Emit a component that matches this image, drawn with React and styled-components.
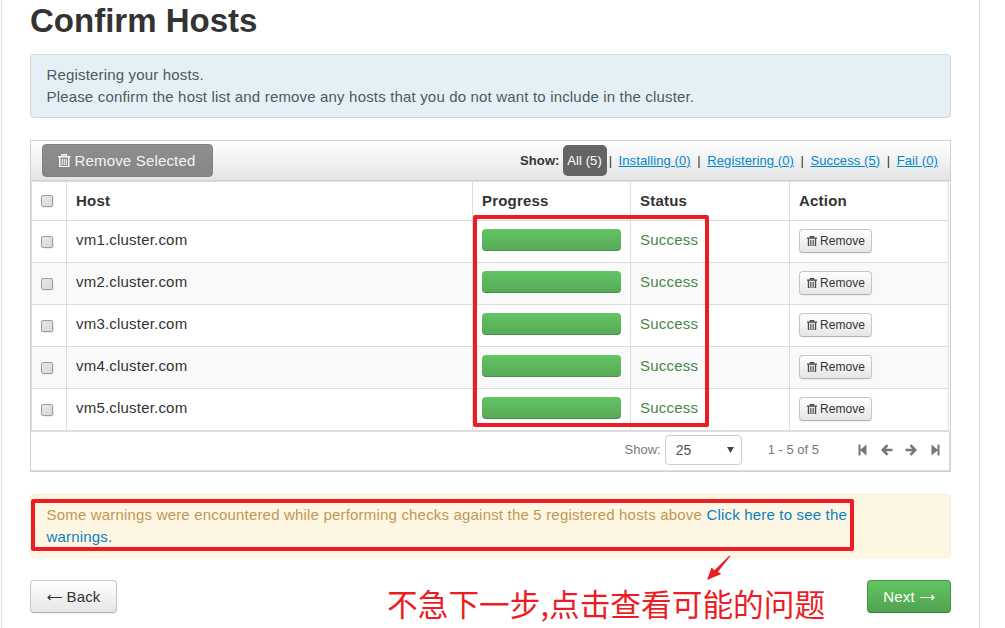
import React from 'react';
import styled, { createGlobalStyle, css } from 'styled-components';

const Global = createGlobalStyle`
  * { box-sizing: border-box; }
  html, body { margin: 0; background: #fff; overflow: hidden; }
  body {
    font: 15px/22px "Liberation Sans", Arial, sans-serif;
    color: #333;
  }
`;

const Page = styled.main`
  position: relative;
  width: 979px;
  height: 628px;
  margin-left: 1px;
  padding: 0 28px;
  border: solid #ddd;
  border-width: 0 1px;
  overflow: hidden;
`;

const Title = styled.h1`
  margin: 0;
  height: 54px;
  font-size: 33px;
  line-height: 41px;
  font-weight: bold;
`;

const Alert = styled.div`
  width: 921px;
  height: 64px;
  padding: 9px 15px 0 15.5px;
  border: 1px solid ${p => (p.$warning ? '#fbeed5' : '#cbd8dd')};
  border-radius: 4px;
  background: ${p => (p.$warning ? '#fdf6e3' : '#e4f0f6')};
  color: ${p => (p.$warning ? '#c09853' : '#4d5a60')};
  letter-spacing: ${p => (p.$warning ? 0.185 : 0.17)}px;
  margin-bottom: 22px;
  white-space: nowrap;
`;

const Link = styled.a`
  color: #0a80c4;
`;

const Panel = styled.section`
  width: 921px;
  height: 332px;
  border: 1px solid #d0d0d0;
  margin-bottom: 22px;
`;

const Toolbar = styled.div`
  display: flex;
  align-items: center;
  height: 40px;
  padding: 0 12px 0 11px;
  border-bottom: 1px solid #d0d0d0;
  background: linear-gradient(#fff, #e4e4e4);
`;

const RemoveSelected = styled.button`
  display: flex;
  align-items: center;
  width: 171px;
  height: 33px;
  padding: 0 0 0 15px;
  gap: 4px;
  border: 1px solid #7f7f7f;
  border-radius: 4px;
  background: linear-gradient(#8e8e8e, #868686);
  color: #f4f4f4;
  font: 15px "Liberation Sans", Arial, sans-serif;
  letter-spacing: 0.17px;
  white-space: nowrap;
`;

const Filters = styled.div`
  display: flex;
  align-items: center;
  margin-left: auto;
  font-size: 13px;
  white-space: nowrap;
  letter-spacing: 0.1px;
`;

const FilterLabel = styled.b`
  margin-right: 3px;
`;

const ActiveFilter = styled.span`
  width: 44px;
  height: 31px;
  border-radius: 5px;
  background: #646464;
  color: #fff;
  line-height: 31px;
  text-align: center;
`;

const FilterLink = styled.a`
  color: #0088cc;
  text-decoration: underline;
`;

const Separator = styled.span`
  width: ${p => p.$w}px;
  text-align: center;
`;

const Table = styled.div`
  width: 918px;
  border-right: 1px solid #ddd;
  border-bottom: 1px solid #ddd;
`;

const Row = styled.div`
  display: grid;
  grid-template-columns: 35px 406px 158px 159px 159px;
  height: ${p => (p.$head ? 39 : 42)}px;
  background: ${p => (p.$striped ? '#f9f9f9' : '#fff')};
  font-weight: ${p => (p.$head ? 'bold' : 'normal')};
`;

const Cell = styled.div`
  display: flex;
  align-items: flex-start;
  padding: 8px 0 0 9px;
  border-left: 1px solid #ddd;
  border-top: 1px solid #ddd;
  color: ${p => (p.$success ? '#468847' : '#333')};
  white-space: nowrap;
  letter-spacing: 0.2px;
`;

const Checkbox = styled.span`
  width: 12px;
  height: 12px;
  margin-top: ${p => (p.$head ? 5 : 7)}px;
  border: 1px solid #9d9d9d;
  border-radius: 2px;
  background: linear-gradient(135deg, #e6e6e6, #dadada);
  box-shadow: 1px 1px 0 #ececec;
`;

const Bar = styled.div`
  width: 139px;
  height: 22px;
  border-radius: 4px;
  background: linear-gradient(#62c462, #57a957);
  box-shadow: inset 0 -1px 0 rgba(0, 0, 0, 0.15);
`;

const buttonBase = css`
  display: flex;
  align-items: center;
  border: 1px solid #c6c6c6;
  border-bottom-color: #b3b3b3;
  border-radius: 4px;
  background: linear-gradient(#fff, #e6e6e6);
  color: #333;
  white-space: nowrap;
  box-shadow: 0 1px 2px rgba(0, 0, 0, 0.06);
`;

const RemoveButton = styled.button`
  ${buttonBase}
  width: 73px;
  height: 24px;
  padding: 0 0 0 7px;
  gap: 3px;
  font: 12px "Liberation Sans", Arial, sans-serif;
  letter-spacing: 0.05px;
`;

const Footer = styled.div`
  display: flex;
  align-items: center;
  height: 40px;
  padding: 0 0 2px 593.5px;
  border: 1px solid #ddd;
  border-left: 0;
  color: #777;
  font-size: 13px;
  white-space: nowrap;
`;

const Select = styled.div`
  display: flex;
  align-items: center;
  justify-content: space-between;
  width: 77px;
  height: 30px;
  margin: 0 26px 0 4px;
  padding: 0 7px 0 10px;
  border: 1px solid #ccc;
  border-radius: 4px;
  color: #555;
  font-size: 14px;
`;

const Pager = styled.div`
  display: flex;
  margin-left: 37px;
  gap: 10px;
`;

const Actions = styled.footer`
  display: flex;
  width: 921px;
  justify-content: space-between;
`;

const NavButton = styled.button`
  ${buttonBase}
  justify-content: center;
  gap: 5px;
  width: ${p => (p.$primary ? 84 : 87)}px;
  height: 33px;
  padding: 0;
  font: 15px "Liberation Sans", Arial, sans-serif;
  letter-spacing: 0.15px;
  ${p =>
    p.$primary &&
    css`
      color: #fff;
      border-color: #4b934b #4b934b #3d7f3d;
      background: linear-gradient(#62c462, #51a351);
    `}
`;

const Highlight = styled.div`
  position: absolute;
  left: ${p => p.$x}px;
  top: ${p => p.$y}px;
  width: ${p => p.$w}px;
  height: ${p => p.$h}px;
  border: 4px solid #ed1c24;
  border-radius: 2px;
`;

const Note = styled.div`
  position: absolute;
  left: 385px;
  top: 582px;
  color: #ed1c24;
  font: 400 30.7px/42px "Noto Sans CJK SC", sans-serif;
  white-space: nowrap;
`;

const Pointer = styled.svg`
  position: absolute;
  left: 703px;
  top: 552px;
`;

const Trash = ({ size = 13, color = '#4a4a4a' }) => (
  <svg width={size} height={size * 13 / 12} viewBox="0 0 12 13" fill="none" stroke={color}>
    <path d="M0 2.6h12M4 2.4V.8h4v1.6M1.7 3v9.2h8.6V3" strokeWidth="1.5" />
    <path d="M4.1 4.6v6.2M6 4.6v6.2M7.9 4.6v6.2" strokeWidth="1" />
  </svg>
);

const PagerIcon = ({ kind, flip }) => (
  <svg width="14" height="14" viewBox="0 0 14 14" fill="#777" transform={flip ? 'scale(-1,1)' : undefined}>
    {kind === 'end' ? (
      <path d="M2.5 1.5h2v5L10.5 1.5v11L4.5 7.5v5h-2z" />
    ) : (
      <path d="M1 7 6.6 1.2l1.8 1.8L5.9 5.7h6.6v2.6H5.9L8.4 11l-1.8 1.8z" />
    )}
  </svg>
);

const LongArrow = ({ color, flip }) => (
  <svg width="15" height="9" viewBox="0 0 15 9" fill="none" stroke={color} transform={flip ? 'scale(-1,1)' : undefined}>
    <path d="M1 5.5h14M3.5 3 1 5.5 3.5 8" strokeWidth="1.1" />
  </svg>
);

const hosts = ['vm1', 'vm2', 'vm3', 'vm4', 'vm5'];

export default function App() {
  return (
    <>
      <Global />
      <Page>
        <Title>Confirm Hosts</Title>
        <Alert>
          Registering your hosts.
          <br />
          Please confirm the host list and remove any hosts that you do not want to include in the cluster.
        </Alert>
        <Panel>
          <Toolbar>
            <RemoveSelected>
              <Trash size={12.5} color="#f4f4f4" />
              Remove Selected
            </RemoveSelected>
            <Filters>
              <FilterLabel>Show:</FilterLabel>
              <ActiveFilter>All (5)</ActiveFilter>
              <Separator $w={8}>|</Separator>
              <Separator $w={4} />
              <FilterLink>Installing (0)</FilterLink>
              <Separator $w={16.5}>|</Separator>
              <FilterLink>Registering (0)</FilterLink>
              <Separator $w={16.5}>|</Separator>
              <FilterLink>Success (5)</FilterLink>
              <Separator $w={16.5}>|</Separator>
              <FilterLink>Fail (0)</FilterLink>
            </Filters>
          </Toolbar>
          <Table>
            <Row $head>
              <Cell><Checkbox $head /></Cell>
              <Cell>Host</Cell>
              <Cell>Progress</Cell>
              <Cell>Status</Cell>
              <Cell>Action</Cell>
            </Row>
            {hosts.map((h, i) => (
              <Row key={h} $striped={i % 2 === 1}>
                <Cell><Checkbox /></Cell>
                <Cell>{h}.cluster.com</Cell>
                <Cell><Bar /></Cell>
                <Cell $success>Success</Cell>
                <Cell>
                  <RemoveButton><Trash size={10} />Remove</RemoveButton>
                </Cell>
              </Row>
            ))}
          </Table>
          <Footer>
            Show:
            <Select>
              25
              <svg width="7" height="6" viewBox="0 0 7 6"><path d="M0 0h7L3.5 6z" fill="#444" /></svg>
            </Select>
            1 - 5 of 5
            <Pager>
              <PagerIcon kind="end" />
              <PagerIcon />
              <PagerIcon flip />
              <PagerIcon kind="end" flip />
            </Pager>
          </Footer>
        </Panel>
        <Alert $warning>
          Some warnings were encountered while performing checks against the 5 registered hosts above{' '}
          <Link>Click here to see the<br />warnings.</Link>
        </Alert>
        <Actions>
          <NavButton><LongArrow color="#333" />Back</NavButton>
          <NavButton $primary>Next<LongArrow color="#fff" flip /></NavButton>
        </Actions>
        <Highlight $x={471} $y={215} $w={236} $h={212} />
        <Highlight $x={29} $y={499} $w={823} $h={52} />
        <Pointer width="30" height="30" viewBox="0 0 30 30">
          <path d="M2 28 6.5 15.5l3 2.7L24.5 3.5l.8.7L13 19.7l3.3 2.3z" fill="#ed1c24" />
        </Pointer>
        <Note>不急下一步,点击查看可能的问题</Note>
      </Page>
    </>
  );
}
